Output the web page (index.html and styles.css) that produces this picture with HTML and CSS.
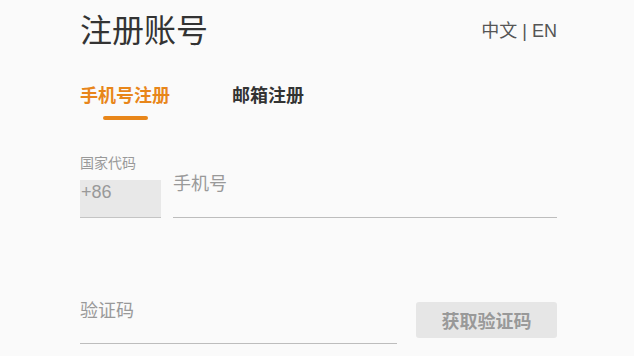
FILE: index.html
```html
<!DOCTYPE html>
<html lang="zh-CN">
<head>
    <meta charset="UTF-8">
    <meta name="viewport" content="width=device-width, initial-scale=1.0">
    <title>注册账号</title>
    <link rel="stylesheet" href="styles.css">
</head>
<body>
    <div class="page">
        <div class="header">
            <h1 class="title">注册账号</h1>
            <div class="lang">中文 | EN</div>
        </div>

        <div class="tabs">
            <div class="tab active">手机号注册</div>
            <div class="tab">邮箱注册</div>
        </div>

        <form class="form" onsubmit="return false;">
            <div class="phone-row">
                <div class="country">
                    <label class="small-label">国家代码</label>
                    <input class="country-code" type="text" value="+86" readonly>
                </div>
                <input class="field phone" type="text" placeholder="手机号">
            </div>

            <div class="code-row">
                <input class="field code" type="text" placeholder="验证码">
                <button class="code-btn" type="button">获取验证码</button>
            </div>
        </form>
    </div>
</body>
</html>
```

FILE: styles.css
```css
body {
    margin: 0;
    background-color: #fafafa;
    font-family: "Liberation Sans", "Noto Sans CJK SC", sans-serif;
    color: #333;
}

.page {
    padding: 15px 77px 0 80px;
}

.header {
    display: flex;
    justify-content: space-between;
    align-items: center;
}

.title {
    margin: 0;
    font-size: 32px;
    line-height: 32px;
    font-weight: normal;
    color: #333;
}

.lang {
    font-size: 18px;
    line-height: 16px;
    color: #555;
}

.tabs {
    display: flex;
    gap: 62px;
    margin-top: 40px;
}

.tab {
    font-size: 18px;
    line-height: 18px;
    font-weight: bold;
    color: #333;
    padding-bottom: 15px;
}

.tab.active {
    color: #e8861a;
    position: relative;
}

.tab.active::after {
    content: "";
    position: absolute;
    left: 23px;
    bottom: 0;
    width: 45px;
    height: 4px;
    border-radius: 2px;
    background-color: #e8861a;
}

.form {
    margin-top: 36px;
}

.phone-row {
    display: flex;
    align-items: flex-end;
}

.country {
    display: flex;
    flex-direction: column;
    width: 81px;
}

.small-label {
    font-size: 14px;
    line-height: 14px;
    color: #999;
}

input {
    font-family: inherit;
    outline: none;
}

.country-code {
    box-sizing: border-box;
    width: 81px;
    height: 38px;
    margin-top: 10px;
    padding: 0 0 12px 1px;
    border: none;
    border-bottom: 1px solid #c4c4c4;
    background-color: #e8e8e8;
    font-size: 18px;
    color: #999;
}

.field {
    box-sizing: border-box;
    border: none;
    border-bottom: 1px solid #bdbdbd;
    background: transparent;
    font-size: 18px;
    color: #333;
    padding-left: 0;
}

.field::placeholder {
    color: #999;
}

.phone {
    flex: 1;
    height: 48px;
    margin-left: 12px;
    padding-top: 4px;
    padding-bottom: 22px;
}

.code-row {
    display: flex;
    align-items: flex-start;
    margin-top: 76px;
}

.code {
    flex: 1;
    height: 50px;
    padding-top: 7px;
    padding-bottom: 21px;
}

.code-btn {
    width: 141px;
    height: 36px;
    margin-left: 19px;
    margin-top: 8px;
    border: none;
    border-radius: 3px;
    background-color: #e6e6e6;
    font-family: inherit;
    font-size: 18px;
    font-weight: bold;
    color: #999;
}
```
